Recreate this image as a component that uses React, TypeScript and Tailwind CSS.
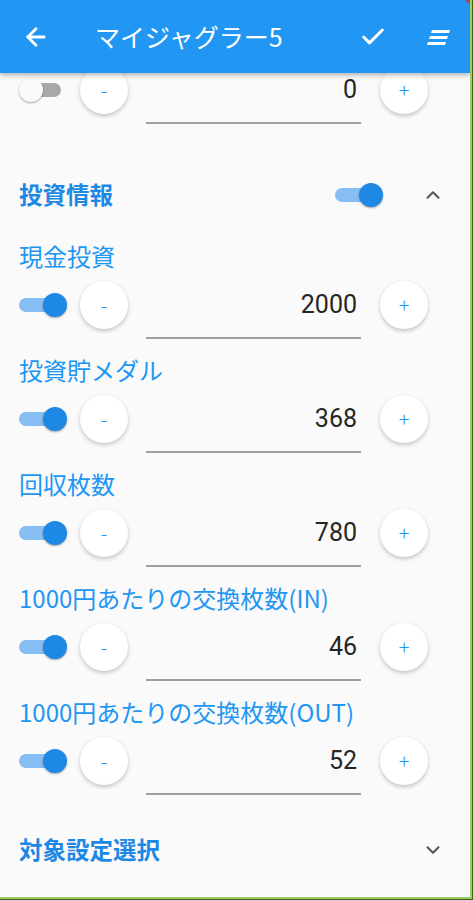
import { ArrowLeft, Check, ChevronDown, ChevronUp } from "lucide-react";

const FONT = { fontFamily: '"Noto Sans CJK JP", "Noto Sans", Roboto, sans-serif' };

type Item = { label: string; value: string; on: boolean };

const ITEMS: Item[] = [
  { label: "現金投資", value: "2000", on: true },
  { label: "投資貯メダル", value: "368", on: true },
  { label: "回収枚数", value: "780", on: true },
  { label: "1000円あたりの交換枚数(IN)", value: "46", on: true },
  { label: "1000円あたりの交換枚数(OUT)", value: "52", on: true },
];

function Toggle({ on }: { on: boolean }) {
  return (
    <div className="relative h-[26px] w-[48px]">
      <div
        className={
          on
            ? "absolute left-0 top-[6px] h-[14px] w-[36px] rounded-full bg-[#86bdf2]"
            : "absolute left-[6px] top-[6px] h-[14px] w-[36px] rounded-full bg-[#a8a8a8]"
        }
      />
      <div
        className={
          on
            ? "absolute right-0 top-px h-[24px] w-[24px] rounded-full bg-[#1e88e5] shadow-[0_1px_2px_rgba(0,0,0,0.35)]"
            : "absolute left-0 top-px h-[24px] w-[24px] rounded-full bg-[#fafafa] shadow-[0_1px_2px_rgba(0,0,0,0.35)]"
        }
      />
    </div>
  );
}

function RoundButton({ sign }: { sign: string }) {
  return (
    <div className="flex h-[48px] w-[48px] items-center justify-center rounded-full bg-white text-[20px] font-light text-[#2196f3] shadow-[0_2px_4px_rgba(0,0,0,0.22)]">
      {sign}
    </div>
  );
}

function StepperRow({ value, on }: { value: string; on: boolean }) {
  return (
    <div className="flex items-start pl-[19px]">
      <div className="flex h-[48px] items-center">
        <Toggle on={on} />
      </div>
      <div className="ml-[13px]">
        <RoundButton sign="-" />
      </div>
      <div className="ml-[18px] h-[58px] w-[215px] border-b-2 border-[#a0a0a0]">
        <div
          className="flex h-[48px] items-center justify-end pr-[4px] text-[25px] text-[#262626]"
          style={{ fontFamily: "Roboto, sans-serif" }}
        >
          {value}
        </div>
      </div>
      <div className="ml-[19px]">
        <RoundButton sign="+" />
      </div>
    </div>
  );
}

function SectionHeader({ title, open, toggle }: { title: string; open: boolean; toggle?: boolean }) {
  return (
    <div className="flex h-[56px] items-center pl-[19px] pr-[26px]">
      <div className="flex-1 text-[23.5px] font-bold text-[#1e88e5]">{title}</div>
      {toggle && (
        <div className="mr-[39px]">
          <Toggle on />
        </div>
      )}
      {open ? (
        <ChevronUp className="h-[22px] w-[22px] text-[#555]" strokeWidth={2.2} />
      ) : (
        <ChevronDown className="h-[22px] w-[22px] text-[#555]" strokeWidth={2.2} />
      )}
    </div>
  );
}

function MenuLines() {
  return (
    <svg width="26" height="18" viewBox="0 0 26 18" fill="white">
      <polygon points="7,2 25,2 24,5 6,5" />
      <polygon points="5,8 23,8 22,11 4,11" />
      <polygon points="3,14 21,14 20,17 2,17" />
    </svg>
  );
}

export default function App() {
  return (
    <div className="h-[900px] w-[473px] bg-[#3f5f1c] pb-px pr-px" style={FONT}>
      <div className="relative flex h-full w-full flex-col overflow-hidden border-b-2 border-r-2 border-[#9ccc65] bg-[#fafafa]">
        <header className="relative z-10 flex h-[73px] shrink-0 items-center bg-[#2196f3] text-white shadow-[0_2px_5px_rgba(0,0,0,0.3)]">
          <ArrowLeft className="ml-[22px] h-[28px] w-[28px]" strokeWidth={2.4} />
          <div className="ml-[45px] flex-1 text-[25px]">マイジャグラー5</div>
          <Check className="mr-[38px] h-[28px] w-[28px]" strokeWidth={2.6} />
          <div className="mr-[19px]">
            <MenuLines />
          </div>
          <div className="absolute -right-[18px] top-[-9px] h-[10px] w-[40px] rotate-45 bg-[#a8445a]" />
        </header>

        <div className="min-h-0 flex-1 overflow-hidden">
          <div className="-mt-[7px]">
            <StepperRow value="0" on={false} />
            <div className="mt-[43px]">
              <SectionHeader title="投資情報" open toggle />
            </div>
            <div className="mt-[18px]">
              {ITEMS.map((item) => (
                <div key={item.label} className="mb-[16px]">
                  <div className="h-[30px] pl-[19px] text-[24px] leading-[30px] text-[#2196f3]">{item.label}</div>
                  <div className="mt-[10px]">
                    <StepperRow value={item.value} on={item.on} />
                  </div>
                </div>
              ))}
            </div>
            <div className="mt-[27px]">
              <SectionHeader title="対象設定選択" open={false} />
            </div>
          </div>
        </div>
      </div>
    </div>
  );
}
